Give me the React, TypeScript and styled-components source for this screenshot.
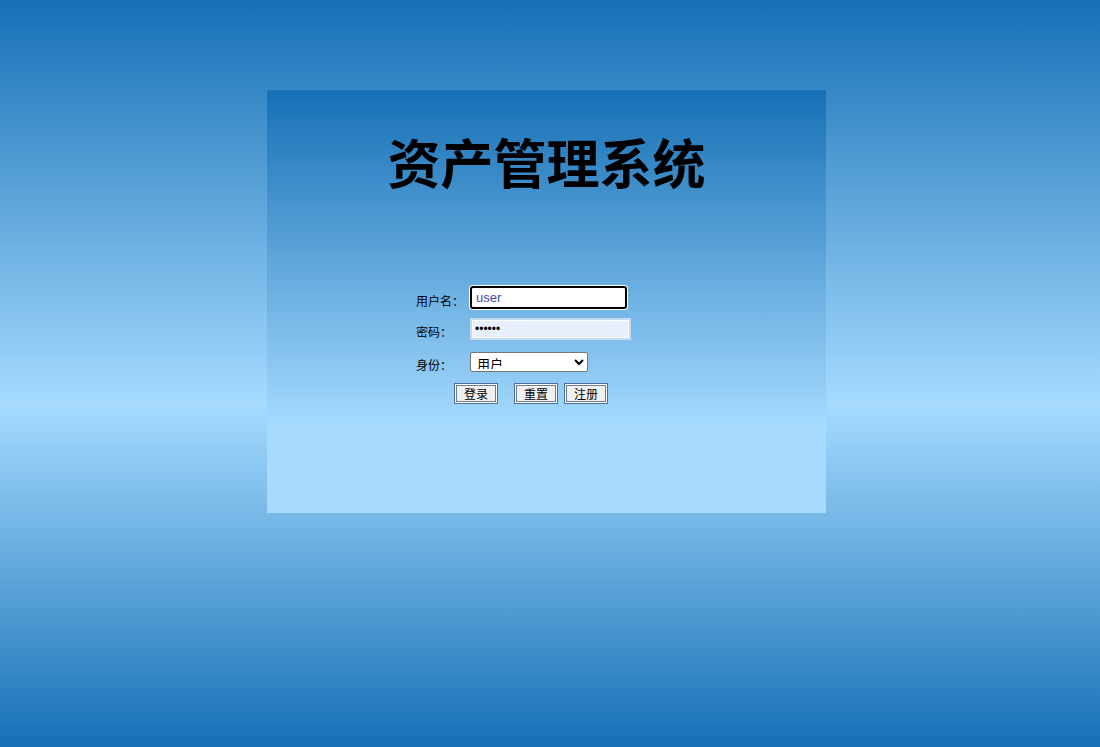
import React from 'react';
import styled, { createGlobalStyle } from 'styled-components';

const GlobalStyle = createGlobalStyle`
  html, body {
    margin: 0;
    padding: 0;
    height: 100%;
  }
  body {
    font-family: "Liberation Sans", "Noto Sans CJK SC", sans-serif;
    background: linear-gradient(to bottom, #1670b6 0%, #a6dbff 54%, #1670b6 100%);
  }
  #root {
    height: 100%;
  }
`;

const Page = styled.div`
  height: 100%;
  display: flex;
  justify-content: center;
  align-items: flex-start;
  padding-right: 7px;
  box-sizing: border-box;
`;

const Panel = styled.div`
  margin-top: 90px;
  width: 559px;
  height: 423px;
  background: linear-gradient(to bottom, #1670b6 0%, #a6dbff 80%, #a6dbff 100%);
  display: flex;
  flex-direction: column;
`;

const Title = styled.h1`
  margin: 45px 0 0 0;
  text-align: center;
  font-family: "Noto Sans CJK SC", sans-serif;
  font-size: 53px;
  font-weight: 700;
  line-height: 1;
  color: #000;
`;

const Form = styled.form`
  margin: 98px 0 0 149px;
  display: flex;
  flex-direction: column;
`;

const Row = styled.div<{ h: number; gap: number }>`
  display: flex;
  align-items: center;
  height: ${(p) => p.h}px;
  margin-bottom: ${(p) => p.gap}px;
`;

const Label = styled.label`
  width: 54px;
  margin-top: 6px;
  font-family: "Noto Sans CJK SC", sans-serif;
  font-size: 12px;
  line-height: 14px;
  color: #000;
`;

const UserInput = styled.input`
  box-sizing: border-box;
  width: 157px;
  height: 23px;
  padding: 0 4px;
  border: 2px solid #000;
  border-radius: 3px;
  box-shadow: 0 0 0 1px #fff;
  background: #fff;
  outline: none;
  font-family: "Liberation Sans", sans-serif;
  font-size: 13px;
  color: #4a4aa8;
`;

const PassInput = styled.input`
  box-sizing: border-box;
  width: 161px;
  height: 22px;
  padding: 0 3px;
  border: 2px solid #c3dcf2;
  box-shadow: inset 0 0 0 1px #fff;
  background: #e8f0fe;
  outline: none;
  font-size: 12px;
  color: #000;
`;

const Select = styled.select`
  box-sizing: border-box;
  width: 118px;
  height: 20px;
  padding: 0 2px 2px 2px;
  border: 1px solid #767676;
  border-radius: 2px;
  background: #fff;
  font-family: "Noto Sans CJK SC", sans-serif;
  font-size: 13px;
  line-height: 16px;
  color: #000;
`;

const Buttons = styled.div`
  display: flex;
  margin-left: 38px;
`;

const Button = styled.button<{ space: number }>`
  box-sizing: border-box;
  width: 44px;
  height: 21px;
  margin-right: ${(p) => p.space}px;
  padding: 0;
  border: 1px solid #4f6e9c;
  box-shadow: inset 0 0 0 1px #fff, inset 0 0 0 2px #6e7f95;
  background: #f0f0f0;
  font-family: "Noto Sans CJK SC", sans-serif;
  font-size: 12px;
  color: #000;
  cursor: pointer;
`;

export default function App() {
  return (
    <>
      <GlobalStyle />
      <Page>
        <Panel>
          <Title>资产管理系统</Title>
          <Form onSubmit={(e) => e.preventDefault()}>
            <Row h={23} gap={9}>
              <Label>用户名：</Label>
              <UserInput type="text" defaultValue="user" />
            </Row>
            <Row h={22} gap={12}>
              <Label>密码：</Label>
              <PassInput type="password" defaultValue="123456" />
            </Row>
            <Row h={20} gap={11}>
              <Label>身份：</Label>
              <Select defaultValue="user">
                <option value="user">用户</option>
                <option value="admin">管理员</option>
              </Select>
            </Row>
            <Buttons>
              <Button type="submit" space={16}>登录</Button>
              <Button type="reset" space={6}>重置</Button>
              <Button type="button" space={0}>注册</Button>
            </Buttons>
          </Form>
        </Panel>
      </Page>
    </>
  );
}
